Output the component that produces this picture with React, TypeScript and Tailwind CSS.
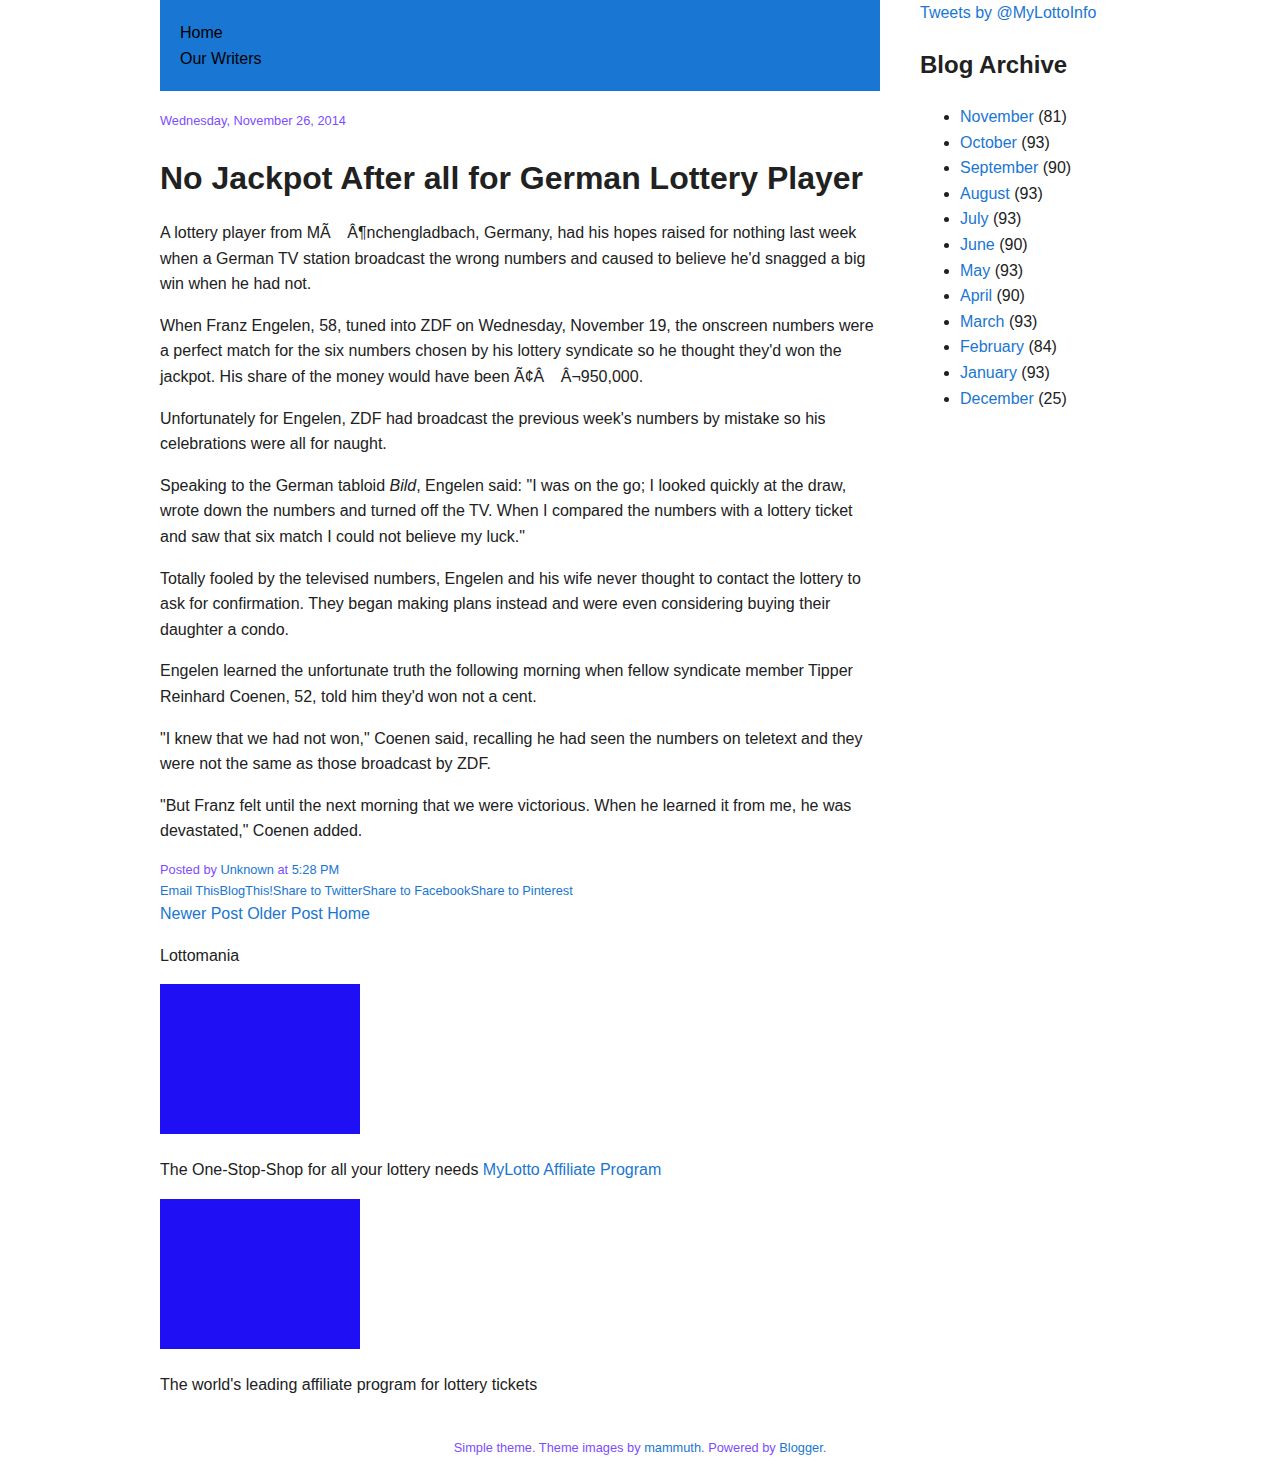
import React from "react";

const months: [string, string][] = [
  ["November", "81"],
  ["October", "93"],
  ["September", "90"],
  ["August", "93"],
  ["July", "93"],
  ["June", "90"],
  ["May", "93"],
  ["April", "90"],
  ["March", "93"],
  ["February", "84"],
  ["January", "93"],
  ["December", "25"],
];

export default function App() {
  return (
    <div
      className="min-h-[1479px] bg-white text-[#212121]"
      style={{ fontFamily: '"Liberation Sans", Arial, sans-serif' }}
    >
      <div className="mx-auto flex w-[960px] gap-[40px]">
        <main className="w-[720px] shrink-0">
          <nav className="h-[91px] bg-[#1976d2] px-[20px] pt-[20px] text-[16px] leading-[26px] text-black">
            <div>Home</div>
            <div>Our Writers</div>
          </nav>
          <div className="mt-[22px] text-[12.8px] leading-[16px] text-[#7c4dff]">
            Wednesday, November 26, 2014
          </div>
          <h1 className="mt-[30px] text-[32px] font-bold leading-[38px] text-[#212121]">
            No Jackpot After all for German Lottery Player
          </h1>
          <div className="mt-[23px] space-y-[16px] text-[16px] leading-[25.6px]">
            <p>
              A lottery player from MÃ{"\u00a0\u00a0\u00a0\u2009"}Â¶nchengladbach, Germany, had his hopes raised for nothing last week when a German TV station broadcast the wrong numbers and caused to believe he'd snagged a big win when he had not.
            </p>
            <p>
              When Franz Engelen, 58, tuned into ZDF on Wednesday, November 19, the onscreen numbers were a perfect match for the six numbers chosen by his lottery syndicate so he thought they'd won the jackpot. His share of the money would have been Ã¢Â{"\u00a0\u00a0\u00a0\u2009"}Â¬950,000.
            </p>
            <p>
              Unfortunately for Engelen, ZDF had broadcast the previous week's numbers by mistake so his celebrations were all for naught.
            </p>
            <p>
              Speaking to the German tabloid <i>Bild</i>, Engelen said: "I was on the go; I looked quickly at the draw, wrote down the numbers and turned off the TV. When I compared the numbers with a lottery ticket and saw that six match I could not believe my luck."
            </p>
            <p>
              Totally fooled by the televised numbers, Engelen and his wife never thought to contact the lottery to ask for confirmation. They began making plans instead and were even considering buying their daughter a condo.
            </p>
            <p>
              Engelen learned the unfortunate truth the following morning when fellow syndicate member Tipper Reinhard Coenen, 52, told him they'd won not a cent.
            </p>
            <p>
              "I knew that we had not won," Coenen said, recalling he had seen the numbers on teletext and they were not the same as those broadcast by ZDF.
            </p>
            <p>
              "But Franz felt until the next morning that we were victorious. When he learned it from me, he was devastated," Coenen added.
            </p>
          </div>
          <div className="mt-[15px] text-[12.8px] leading-[21px] text-[#7c4dff]">
            Posted by <span className="text-[#1976d2]">Unknown</span> at <span className="text-[#1976d2]">5:28 PM</span>
          </div>
          <div className="text-[12.8px] leading-[21px] text-[#1976d2]">
            <span>Email This</span>
            <span>BlogThis!</span>
            <span>Share to Twitter</span>
            <span>Share to Facebook</span>
            <span>Share to Pinterest</span>
          </div>
          <div className="mt-[1px] text-[16px] leading-[24px] text-[#1976d2]">
            <span>Newer Post</span> <span>Older Post</span> <span>Home</span>
          </div>
          <div className="mt-[18px] text-[16px] leading-[24px]">Lottomania</div>
          <div className="mt-[16px] h-[150px] w-[200px] bg-[#1f0ff5]" />
          <div className="mt-[24px] text-[16px] leading-[24px]">
            The One-Stop-Shop for all your lottery needs <span className="text-[#1976d2]">MyLotto Affiliate Program</span>
          </div>
          <div className="mt-[17px] h-[150px] w-[200px] bg-[#1f0ff5]" />
          <div className="mt-[24px] text-[16px] leading-[24px]">
            The world's leading affiliate program for lottery tickets
          </div>
        </main>
        <aside className="w-[200px] shrink-0">
          <div className="mt-[1px] text-[16px] leading-[24px] text-[#1976d2]">Tweets by @MyLottoInfo</div>
          <h2 className="mt-[25px] text-[24px] font-bold leading-[30px] text-[#212121]">Blog Archive</h2>
          <ul className="mt-[24px] list-disc pl-[40px] text-[16px] leading-[25.6px]">
            {months.map(([m, n]) => (
              <li key={m}>
                <span className="text-[#1976d2]">{m}</span> ({n})
              </li>
            ))}
          </ul>
        </aside>
      </div>
      <div className="mt-[43px] pb-[22px] text-center text-[12.8px] leading-[16px] text-[#7c4dff]">
        Simple theme. Theme images by <span className="text-[#1976d2]">mammuth</span>. Powered by <span className="text-[#1976d2]">Blogger</span>.
      </div>
    </div>
  );
}
